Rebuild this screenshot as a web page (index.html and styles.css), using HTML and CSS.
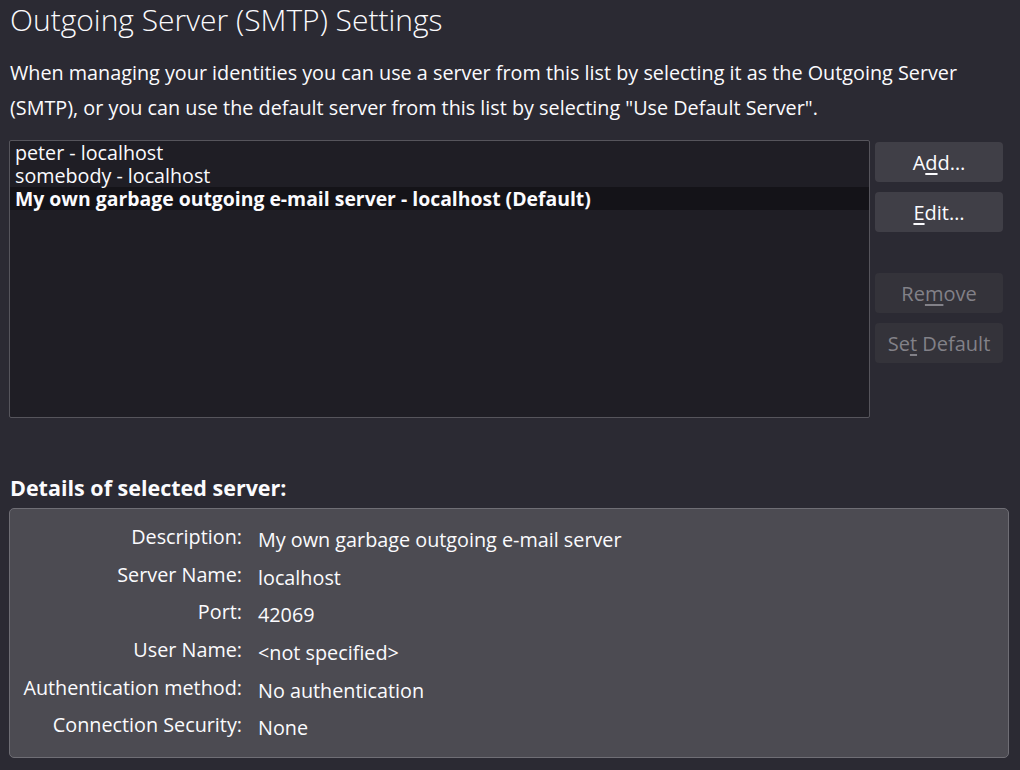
FILE: index.html
```html
<!DOCTYPE html>
<html>
<head>
<meta charset="utf-8">
<link rel="stylesheet" href="styles.css">
</head>
<body>
<h1 class="title">Outgoing Server (SMTP) Settings</h1>
<p class="intro">When managing your identities you can use a server from this list by selecting it as the Outgoing Server<br>(SMTP), or you can use the default server from this list by selecting "Use Default Server".</p>
<div class="main">
  <div class="list">
    <div class="item"><span class="item-text">peter - localhost</span></div>
    <div class="item"><span class="item-text">somebody - localhost</span></div>
    <div class="item selected"><span class="item-text">My own garbage outgoing e-mail server - localhost (Default)</span></div>
  </div>
  <div class="buttons">
    <button class="btn">A<u>d</u>d…</button>
    <button class="btn"><u>E</u>dit…</button>
    <div class="spacer"></div>
    <button class="btn disabled">Re<u>m</u>ove</button>
    <button class="btn disabled">Se<u>t</u> Default</button>
  </div>
</div>
<h2 class="details-title">Details of selected server:</h2>
<div class="details">
  <div class="label">Description:</div><div class="value">My own garbage outgoing e-mail server</div>
  <div class="label">Server Name:</div><div class="value">localhost</div>
  <div class="label">Port:</div><div class="value">42069</div>
  <div class="label">User Name:</div><div class="value">&lt;not specified&gt;</div>
  <div class="label">Authentication method:</div><div class="value">No authentication</div>
  <div class="label">Connection Security:</div><div class="value">None</div>
</div>
</body>
</html>
```

FILE: styles.css
```css
html, body {
  margin: 0;
  padding: 0;
  background: #2b2a33;
}
body {
  padding: 0 12px 0 10px;
  font-family: "Open Sans", "Noto Sans", sans-serif;
  color: #fbfbfe;
}
.title {
  margin: 0;
  padding-top: 0;
  font-size: 30px;
  font-weight: 300;
  line-height: 40px;
}
.intro {
  margin: 15px 0 0;
  font-size: 19.8px;
  line-height: 35px;
}
.main {
  display: flex;
  gap: 5px;
  margin-top: 15px;
  margin-left: -1px;
}
.list {
  width: 859px;
  height: 276px;
  background: #1f1e25;
  border: 1px solid #56555c;
  border-radius: 2px;
}
.item {
  display: flex;
  align-items: center;
  height: 23px;
  padding-left: 5px;
  font-size: 19.7px;
}
.item-text {
  display: inline-block;
  line-height: 22px;
}
.item.selected {
  background: #141318;
  font-weight: 700;
  font-size: 19.4px;
}
.buttons {
  display: flex;
  flex-direction: column;
  gap: 10px;
  padding-top: 2px;
}
.spacer {
  height: 21px;
}
.btn {
  width: 128px;
  height: 40px;
  border: none;
  border-radius: 4px;
  background: #403f47;
  color: #fbfbfe;
  font-family: inherit;
  font-size: 20px;
  padding: 0;
}
.btn.disabled {
  background: #34333a;
  color: #828188;
}
.btn u {
  text-underline-offset: 3px;
}
.details-title {
  margin: 57px 0 0;
  font-size: 21.5px;
  font-weight: 700;
  line-height: 26px;
}
.details {
  margin: 7px 0 0 -1px;
  height: 250px;
  box-sizing: border-box;
  width: 1000px;
  background: #4c4b52;
  border: 1px solid #6f6e75;
  border-radius: 5px;
  display: grid;
  grid-template-columns: 232px 1fr;
  column-gap: 16px;
  grid-auto-rows: 37.7px;
  padding-top: 16px;
  font-size: 19.8px;
}
.label {
  text-align: right;
  line-height: 24px;
}
.value {
  line-height: 24px;
  padding-top: 3px;
}
```
